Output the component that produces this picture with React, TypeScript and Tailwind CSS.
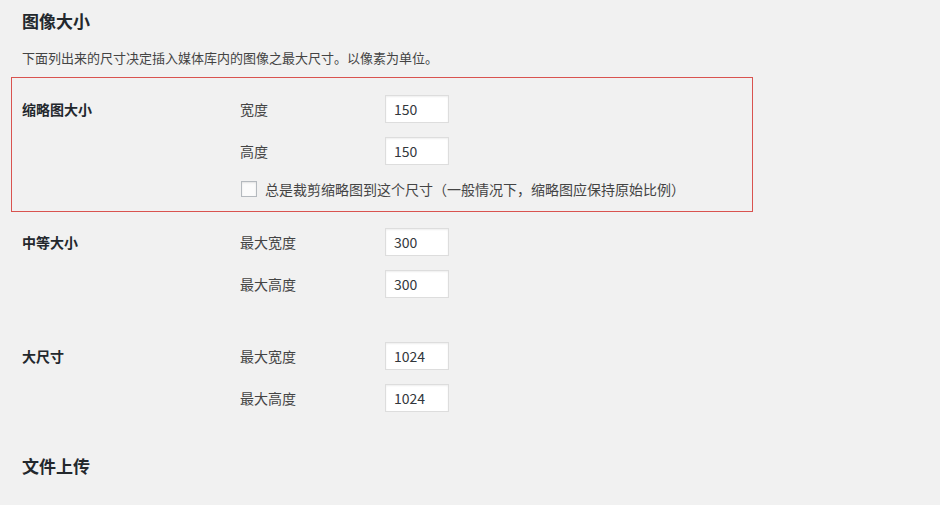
import React from 'react';

const font = { fontFamily: '"Noto Sans CJK SC", "Noto Sans", sans-serif' };

function NumInput({ value }: { value: string }) {
  return (
    <div className="w-[64px] h-[28px] bg-white border border-[#dddddd] shadow-[inset_0_1px_2px_rgba(0,0,0,0.07)] flex items-center pl-[8px] text-[14px] text-[#32373c]">
      {value}
    </div>
  );
}

function Row({ head, label, value, className = '' }: { head?: string; label: string; value: string; className?: string }) {
  return (
    <div className={`flex items-center h-[28px] ${className}`}>
      <div className="w-[218px] text-[14px] font-bold text-[#23282d]">{head}</div>
      <div className="w-[145px] text-[14px] text-[#444]">{label}</div>
      <NumInput value={value} />
    </div>
  );
}

export default function App() {
  return (
    <div className="w-[940px] h-[505px] bg-[#f1f1f1] overflow-hidden pl-[22px] pt-[10px]" style={font}>
      <h2 className="text-[17px] leading-[22px] font-bold text-[#23282d]">图像大小</h2>
      <p className="mt-[16px] text-[13px] leading-[20px] text-[#444]">
        下面列出来的尺寸决定插入媒体库内的图像之最大尺寸。以像素为单位。
      </p>

      {/* highlighted thumbnail block */}
      <div className="mt-[9px] -ml-[11px] w-[742px] border border-[#d9534f] pl-[10px] pt-[17px] pb-[14px]">
        <Row head="缩略图大小" label="宽度" value="150" />
        <Row label="高度" value="150" className="mt-[14px]" />
        <div className="flex items-center mt-[16px] h-[16px]">
          <div className="w-[219px]" />
          <span className="w-[16px] h-[16px] border border-[#b4b9be] bg-[#fbfbfb] shadow-[inset_0_1px_2px_rgba(0,0,0,0.1)]" />
          <span className="ml-[8px] text-[14px] text-[#444]">总是裁剪缩略图到这个尺寸（一般情况下，缩略图应保持原始比例）</span>
        </div>
      </div>

      <Row head="中等大小" label="最大宽度" value="300" className="mt-[16px]" />
      <Row label="最大高度" value="300" className="mt-[14px]" />

      <Row head="大尺寸" label="最大宽度" value="1024" className="mt-[44px]" />
      <Row label="最大高度" value="1024" className="mt-[14px]" />

      <h2 className="mt-[43px] text-[17px] leading-[22px] font-bold text-[#23282d]">文件上传</h2>
    </div>
  );
}
